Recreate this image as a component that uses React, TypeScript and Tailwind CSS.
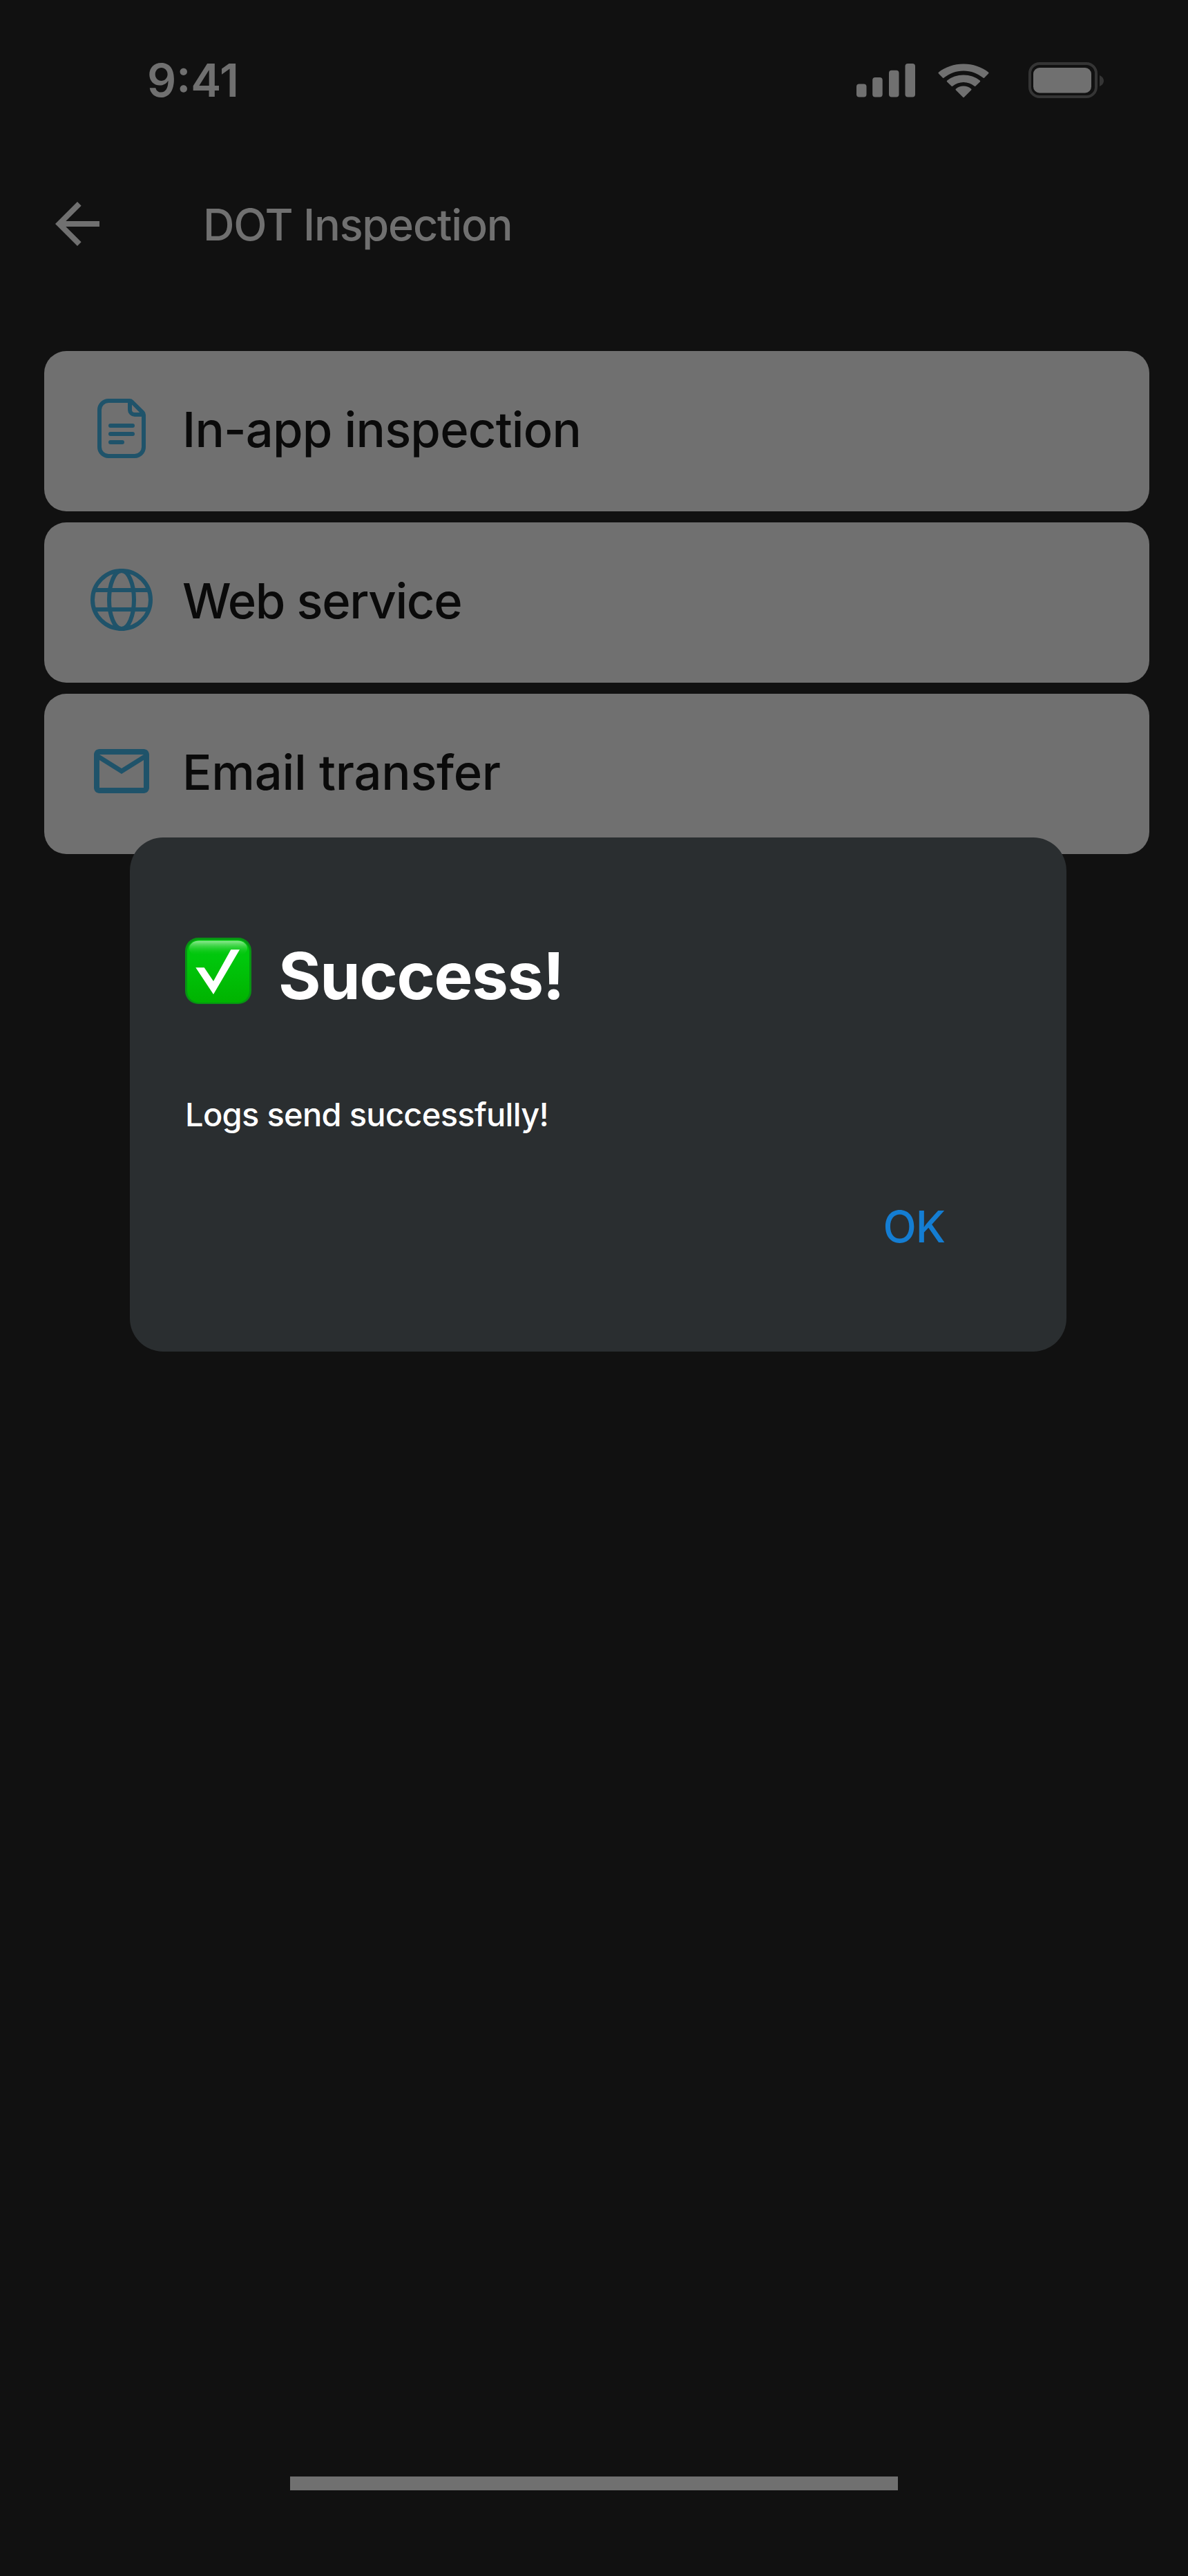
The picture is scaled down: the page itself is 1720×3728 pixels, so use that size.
import type { ReactNode } from "react";

import { MdArrowBack, MdOutlineEmail } from "react-icons/md";

function SignalIcon() {
  return (
    <svg width="86" height="50" viewBox="0 0 86 50" fill="currentColor">
      <rect x="0" y="30.5" width="14.5" height="19" rx="4" />
      <rect x="23.2" y="21" width="14.5" height="28.5" rx="4" />
      <rect x="47" y="10.7" width="14.5" height="38.8" rx="4" />
      <rect x="70.5" y="1" width="14.5" height="48.5" rx="4" />
    </svg>
  );
}

function WifiIcon() {
  return (
    <svg width="76" height="50" viewBox="0 0 76 50" fill="currentColor">
      <path d="M38 11.5c10.9 0 20.8 4.1 28.3 10.1q1 .9 1.9-.1l5.9-6q1-1-.1-2C64.5 6 51.6 1.5 38 1.5S11.5 6 2 13.5q-1.1 1-.1 2l5.900 6q.9 1 1.9.1C17.2 15.600 27.1 11.500 38 11.500Z" />
      <path d="M38 28c6 0 11.4 2.2 15.6 5.6q1 .9 1.9-.1l6.3-6.1q1-1-.1-2C55.2 20.500 47 17.500 38 17.500s-17.200 3-23.700 7.900q-1.100 1-.1 2l6.300 6.100q.9 1 1.900.1C26.600 30.200 32 28 38 28Z" />
      <path d="M49 37.5q1 1 0 2L39 49.5q-1 1-2 0L27 39.5q-1-1 0-2C30 35.1 33.800 33.500 38 33.500S46 35.100 49 37.500Z" />
    </svg>
  );
}

function BatteryIcon() {
  return (
    <svg width="110" height="52" viewBox="0 0 110 52">
      <rect x="2" y="2" width="96" height="48" rx="14" fill="none" stroke="#353535" strokeWidth="4" />
      <rect x="7" y="8" width="84" height="36.5" rx="9" fill="currentColor" />
      <path d="M103 19c3.7 1.6 6 4.6 6 8s-2.3 6.400-6 8Z" fill="#353535" />
    </svg>
  );
}

function DocumentIcon() {
  return (
    <svg width="96" height="96" viewBox="0 0 96 96" fill="none" stroke="currentColor" strokeWidth="6">
      <path d="M59.5 8H29A13 13 0 0 0 16 21v54a13 13 0 0 0 13 13h38a13 13 0 0 0 13-13V28.5a5 5 0 0 0-1.5-3.5L63 9.5A5 5 0 0 0 59.5 8Z" />
      <path d="M60 8v13a7 7 0 0 0 7 7h13" />
      <path d="M32 44h32M32 56h32M32 68h17" strokeLinecap="round" />
    </svg>
  );
}

function GlobeIcon() {
  return (
    <svg width="96" height="96" viewBox="0 0 96 96" fill="none" stroke="currentColor" strokeWidth="6">
      <circle cx="48" cy="48" r="42" />
      <ellipse cx="48" cy="48" rx="18" ry="42" />
      <path d="M8 34h80M8 62h80" />
    </svg>
  );
}

function CheckEmoji() {
  return (
    <svg width="96" height="96" viewBox="0 0 96 96">
      <defs>
        <linearGradient id="face" x1="0" y1="0" x2="0" y2="1">
          <stop offset="0" stopColor="#00c70c" />
          <stop offset="0.3" stopColor="#00c70c" />
          <stop offset="1" stopColor="#00b300" />
        </linearGradient>
        <linearGradient id="gloss" x1="0" y1="0" x2="0" y2="1">
          <stop offset="0" stopColor="#8fe892" />
          <stop offset="1" stopColor="#00c70c" stopOpacity="0" />
        </linearGradient>
      </defs>
      <rect width="96" height="96" rx="19" fill="#079413" />
      <rect x="3" y="3" width="90" height="91" rx="17" fill="url(#face)" />
      <rect x="6" y="4.5" width="84" height="22" rx="14" fill="url(#gloss)" />
      <path d="M66.3 17.3H79L41 82 15.3 43.3h12.4L41 63Z" fill="#fff" />
    </svg>
  );
}

const options: { label: string; icon: ReactNode; spacing: string }[] = [
  { label: "In-app inspection", icon: <DocumentIcon />, spacing: "tracking-[-0.8px]" },
  { label: "Web service", icon: <GlobeIcon />, spacing: "tracking-[-1.35px]" },
  { label: "Email transfer", icon: <MdOutlineEmail size={96} />, spacing: "tracking-[-0.25px]" },
];

export default function App() {
  return (
    <div className="relative flex h-[3728px] w-[1720px] flex-col overflow-hidden bg-[#111111] font-['Inter',sans-serif] text-[#707070]">
      <div className="flex h-[232px] items-center pr-[121px] pl-[213px]">
        <span className="flex-1 text-[66px] leading-none font-semibold">9:41</span>
        <div className="flex items-center">
          <SignalIcon />
          <div className="ml-[31px]">
            <WifiIcon />
          </div>
          <div className="ml-14">
            <BatteryIcon />
          </div>
        </div>
      </div>

      <header className="flex h-[184px] items-center pl-16">
        <MdArrowBack size={96} />
        <h1 className="ml-[134px] pt-0.5 text-[63px] leading-none font-medium tracking-[-1.2px] whitespace-nowrap">
          DOT Inspection
        </h1>
      </header>

      <main className="flex flex-1 flex-col gap-4 pt-[92px] pr-14 pl-16">
        {options.map((option) => (
          <button
            key={option.label}
            className="flex h-[232px] items-center rounded-[32px] bg-[#707070] pb-2 pl-16 text-[#1f536a]"
          >
            {option.icon}
            <span
              className={`ml-10 pt-[5px] text-[70.5px] leading-none font-medium whitespace-nowrap text-[#0a0a0a] ${option.spacing}`}
            >
              {option.label}
            </span>
          </button>
        ))}
      </main>

      <div className="mb-[124px] ml-[420px] h-5 w-[880px] bg-[#707070]" />

      <div className="absolute top-[1212px] left-[188px] flex h-[744px] w-[1356px] flex-col rounded-[48px] bg-[#2a2e30] px-20 pt-[145px] text-white">
        <div className="flex h-24 items-center">
          <CheckEmoji />
          <h2 className="ml-[39px] pt-3.5 text-[94px] leading-none font-bold tracking-[-1.3px] whitespace-nowrap">
            Success!
          </h2>
        </div>
        <p className="mt-[130px] text-[47px] leading-[60px] font-medium tracking-[-0.7px] whitespace-nowrap">
          Logs send successfully!
        </p>
        <button className="mt-[100px] mr-[96px] self-end text-[63px] leading-[64px] font-medium tracking-[-1px] text-[#147dd2]">
          OK
        </button>
      </div>
    </div>
  );
}
